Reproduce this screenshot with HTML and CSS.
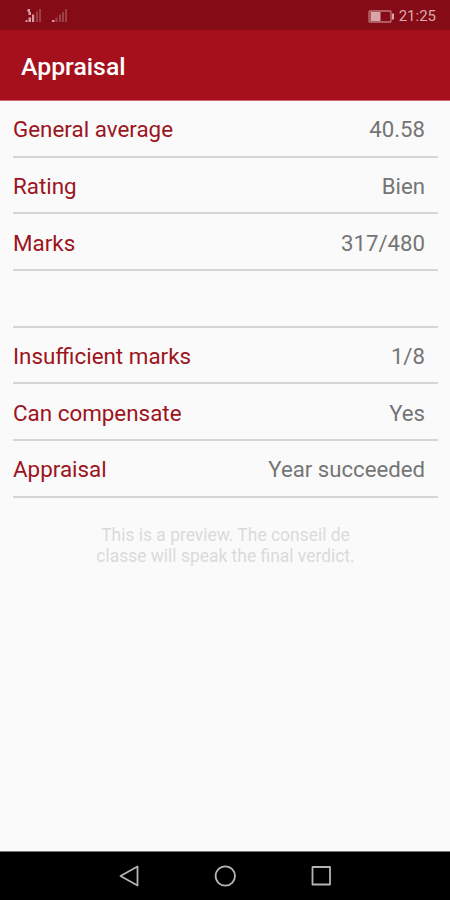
FILE: index.html
```html
<!DOCTYPE html>
<html lang="en">
<head>
<meta charset="utf-8">
<title>Appraisal</title>
<link rel="stylesheet" href="styles.css">
</head>
<body>
<div class="status">
<svg class="signals" width="48" height="18" viewBox="0 0 48 18"><g fill="#d59da1"><path d="M1.500 13H3.500v2h-2zM4.500 10.500H7V15H4.500zM8 7.500h2.200V15H8zM3.500 2H6v3H3.500zM4.500 5H7v3H4.500z"/></g><g fill="#9c4048"><path d="M12 4.500h2V15h-2zM15 2h2v13h-2zM31.500 10.500h2V15h-2zM35 7.500h2V15h-2zM38 5h2v10h-2zM41 2h2v13h-2z"/></g><path d="M28 13h2.500v2H28z" fill="#d59da1"/></svg>
<span class="right"><svg width="27" height="13" viewBox="0 0 27 13"><rect x="1" y="1" width="22" height="11" rx="1" fill="none" stroke="#bd777d" stroke-width="1.300"/><path d="M2.500 2h10v9h-10z" fill="#d9a5a9"/><path d="M24 3.500h2v6h-2z" fill="#d9a5a9"/></svg><span class="clock">21:25</span></span>
</div>
<header class="bar"><h1>Appraisal</h1></header>
<main>
<div class="row"><span class="label">General average</span><span class="value">40.58</span></div>
<div class="row"><span class="label">Rating</span><span class="value">Bien</span></div>
<div class="row"><span class="label">Marks</span><span class="value">317/480</span></div>
<div class="row"></div>
<div class="row"><span class="label">Insufficient marks</span><span class="value">1/8</span></div>
<div class="row"><span class="label">Can compensate</span><span class="value">Yes</span></div>
<div class="row"><span class="label">Appraisal</span><span class="value">Year succeeded</span></div>
<p class="note">This is a preview. The conseil de<br>classe will speak the final verdict.</p>
</main>
<nav class="nav">
<svg width="24" height="24" viewBox="0 0 24 24"><path d="M20.500 2.500v19L3.500 12z"/></svg>
<svg width="24" height="24" viewBox="0 0 24 24"><circle cx="12.300" cy="12" r="9.700"/></svg>
<svg width="24" height="24" viewBox="0 0 24 24"><path d="M3.500 3h17.500v17.500H3.500z"/></svg>
</nav>
</body>
</html>
```
FILE: styles.css
```css
* { box-sizing: border-box; }
body { margin: 0; height: 900px; display: flex; flex-direction: column; background: #fafafa; font-family: Roboto, sans-serif; overflow: hidden; }
.status { height: 30px; background: #850c16; display: flex; justify-content: space-between; align-items: center; padding: 2px 14px 0 24px; }
.right { display: flex; align-items: center; gap: 4px; }
.clock { color: #d9a9ad; font-size: 15px; line-height: 18px; }
.bar { height: 70px; background: #a5101c; display: flex; align-items: center; padding: 3px 21px 0; }
h1 { margin: 0; color: #fff; font-size: 24.8px; font-weight: 500; line-height: 30px; }
main { flex: 1; border-top: 1px solid #cb6973; padding: 0 12px 0 13px; }
.row { height: 56.7px; border-bottom: 2px solid #d6d6d6; display: flex; justify-content: space-between; align-items: center; padding: 1.6px 13px 0 0; font-size: 22.4px; }
.label { color: #9c1420; }
.value { color: #757575; font-size: 22.2px; }
.note { margin: 27.500px 0 0; text-align: center; font-size: 17.45px; line-height: 20.5px; color: #dadada; }
.nav { height: 49px; background: #000; border-top: 1px solid #777; display: flex; justify-content: center; align-items: center; gap: 72px; }
.nav svg { fill: none; stroke: #b4b4b4; stroke-width: 1.8; stroke-linejoin: round; }
```
